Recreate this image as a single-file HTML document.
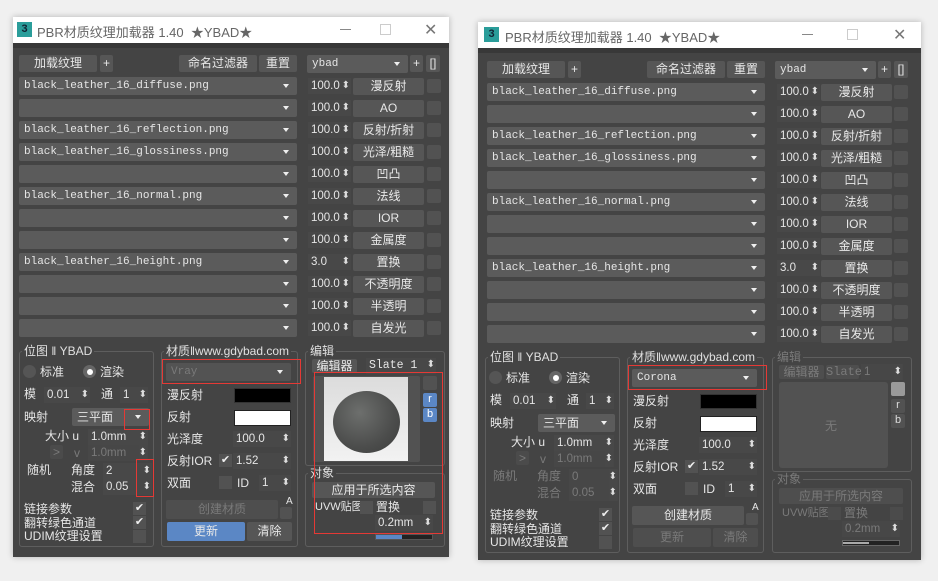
<!DOCTYPE html>
<html><head><meta charset="utf-8">
<style>
*{box-sizing:border-box;margin:0;padding:0}
body{width:938px;height:575px;background:#f0f0f0;position:relative;overflow:hidden;font-family:"Liberation Sans","Noto Sans CJK SC",sans-serif;font-size:12px;color:#dcdcdc}
.a{position:absolute}
.win{position:absolute;left:0;top:0;width:938px;height:575px}
.chrome{position:absolute;background:#444;box-shadow:0 0 6px rgba(0,0,0,.25)}
.title{position:absolute;background:#fff;color:#666;font-size:13px}
.dd{position:absolute;background:#5b5b5b;border-radius:2px;height:18px;line-height:18px;padding-left:5px;font-family:"Liberation Mono","Noto Sans CJK SC",monospace;font-size:11px;color:#e6e6e6;white-space:nowrap;overflow:hidden}
.dd:after{content:"";position:absolute;right:8px;top:7px;border-left:3px solid transparent;border-right:3px solid transparent;border-top:4px solid #eee}
.sp{position:absolute;background:#484848;height:16px;line-height:16px;padding-left:3px;font-size:11.5px;color:#e6e6e6;font-family:"Liberation Sans",sans-serif;overflow:hidden;white-space:nowrap}
.sp:after{content:"⬍";position:absolute;right:1px;top:0;font-size:10px;color:#ddd;background:#484848}
.btn{position:absolute;background:#565656;border-radius:2px;text-align:center;color:#e8e8e8;height:17px;line-height:17px;font-size:12px;white-space:nowrap}
.box{position:absolute;background:#525252;border-radius:2px;width:14px;height:14px}
.grp{position:absolute;border:1px solid #5e5e5e;border-radius:3px}
.gt{position:absolute;background:#444;padding:0 2px;font-size:12px;line-height:14px;color:#e0e0e0;white-space:nowrap}
.t{position:absolute;white-space:nowrap;font-size:12px;line-height:14px;color:#e6e6e6}
.dis{color:#7a7a7a!important}
.chk{position:absolute;background:#525252;width:13px;height:13px;font-size:11px;line-height:13px;text-align:center;color:#eee}
.red{position:absolute;border:1px solid #e53935}
.rad{position:absolute;width:13px;height:13px;border-radius:50%;background:#555}
.blue{background:#5b87c5!important}
.mn{position:absolute;width:11px;height:1px;background:#888}
.mx{position:absolute;width:11px;height:11px;border:1px solid #ccc}
.cl{position:absolute;font-size:16px;color:#777}
</style></head><body>

<div class="win">
<div class="chrome" style="left:13px;top:17px;width:436px;height:540px"></div>
<div class="title" style="left:13px;top:17px;width:436px;height:26px">
 <div class="a" style="left:4px;top:5px;width:15px;height:15px;background:#2a9d9a;color:#123;font-size:11px;font-weight:bold;text-align:center;line-height:15px">3</div>
 <div class="a" style="left:24px;top:5px;white-space:nowrap">PBR材质纹理加载器 1.40 &nbsp;★YBAD★</div>
 <div class="mn" style="left:327px;top:12px"></div>
 <div class="mx" style="left:367px;top:7px"></div>
 <div class="cl" style="left:411px;top:3px">✕</div>
</div>
<div class="a" style="left:13px;top:43px;width:436px;height:5px;background:#383838"></div>
</div>

<div class="win">
<div class="chrome" style="left:478px;top:22px;width:443px;height:538px"></div>
<div class="title" style="left:478px;top:22px;width:443px;height:26px">
 <div class="a" style="left:6px;top:5px;width:15px;height:15px;background:#2a9d9a;color:#123;font-size:11px;font-weight:bold;text-align:center;line-height:15px">3</div>
 <div class="a" style="left:27px;top:5px;white-space:nowrap">PBR材质纹理加载器 1.40 &nbsp;★YBAD★</div>
 <div class="mn" style="left:324px;top:12px"></div>
 <div class="mx" style="left:369px;top:7px"></div>
 <div class="cl" style="left:415px;top:3px">✕</div>
</div>
<div class="a" style="left:478px;top:48px;width:443px;height:5px;background:#383838"></div>
</div>

<div class="win">
<div class="btn" style="left:19px;top:55px;width:78px">加载纹理</div>
<div class="btn" style="left:100px;top:55px;width:13px">+</div>
<div class="btn" style="left:179px;top:55px;width:78px">命名过滤器</div>
<div class="btn" style="left:259px;top:55px;width:38px">重置</div>
<div class="dd" style="left:307px;top:55px;width:101px">ybad</div>
<div class="btn" style="left:410px;top:55px;width:13px">+</div>
<div class="btn" style="left:426px;top:55px;width:14px">[]</div>

<div class="dd" style="left:19px;top:77px;width:278px">black_leather_16_diffuse.png</div>
<div class="dd" style="left:19px;top:99px;width:278px"></div>
<div class="dd" style="left:19px;top:121px;width:278px">black_leather_16_reflection.png</div>
<div class="dd" style="left:19px;top:143px;width:278px">black_leather_16_glossiness.png</div>
<div class="dd" style="left:19px;top:165px;width:278px"></div>
<div class="dd" style="left:19px;top:187px;width:278px">black_leather_16_normal.png</div>
<div class="dd" style="left:19px;top:209px;width:278px"></div>
<div class="dd" style="left:19px;top:231px;width:278px"></div>
<div class="dd" style="left:19px;top:253px;width:278px">black_leather_16_height.png</div>
<div class="dd" style="left:19px;top:275px;width:278px"></div>
<div class="dd" style="left:19px;top:297px;width:278px"></div>
<div class="dd" style="left:19px;top:319px;width:278px"></div>

<div class="sp" style="left:308px;top:78px;width:43px">100.0</div>
<div class="sp" style="left:308px;top:100px;width:43px">100.0</div>
<div class="sp" style="left:308px;top:122px;width:43px">100.0</div>
<div class="sp" style="left:308px;top:144px;width:43px">100.0</div>
<div class="sp" style="left:308px;top:166px;width:43px">100.0</div>
<div class="sp" style="left:308px;top:188px;width:43px">100.0</div>
<div class="sp" style="left:308px;top:210px;width:43px">100.0</div>
<div class="sp" style="left:308px;top:232px;width:43px">100.0</div>
<div class="sp" style="left:308px;top:254px;width:43px">3.0</div>
<div class="sp" style="left:308px;top:276px;width:43px">100.0</div>
<div class="sp" style="left:308px;top:298px;width:43px">100.0</div>
<div class="sp" style="left:308px;top:320px;width:43px">100.0</div>

<div class="btn" style="left:353px;top:78px;width:71px">漫反射</div>
<div class="btn" style="left:353px;top:100px;width:71px">AO</div>
<div class="btn" style="left:353px;top:122px;width:71px">反射/折射</div>
<div class="btn" style="left:353px;top:144px;width:71px">光泽/粗糙</div>
<div class="btn" style="left:353px;top:166px;width:71px">凹凸</div>
<div class="btn" style="left:353px;top:188px;width:71px">法线</div>
<div class="btn" style="left:353px;top:210px;width:71px">IOR</div>
<div class="btn" style="left:353px;top:232px;width:71px">金属度</div>
<div class="btn" style="left:353px;top:254px;width:71px">置换</div>
<div class="btn" style="left:353px;top:276px;width:71px">不透明度</div>
<div class="btn" style="left:353px;top:298px;width:71px">半透明</div>
<div class="btn" style="left:353px;top:320px;width:71px">自发光</div>

<div class="box" style="left:427px;top:79px"></div>
<div class="box" style="left:427px;top:101px"></div>
<div class="box" style="left:427px;top:123px"></div>
<div class="box" style="left:427px;top:145px"></div>
<div class="box" style="left:427px;top:167px"></div>
<div class="box" style="left:427px;top:189px"></div>
<div class="box" style="left:427px;top:211px"></div>
<div class="box" style="left:427px;top:233px"></div>
<div class="box" style="left:427px;top:255px"></div>
<div class="box" style="left:427px;top:277px"></div>
<div class="box" style="left:427px;top:299px"></div>
<div class="box" style="left:427px;top:321px"></div>

<div class="grp" style="left:19px;top:351px;width:135px;height:196px"></div>
<div class="gt" style="left:22px;top:344px">位图 ‖ YBAD</div>
<div class="grp" style="left:161px;top:351px;width:137px;height:196px"></div>
<div class="gt" style="left:164px;top:344px">材质‖www.gdybad.com</div>
<div class="grp" style="left:305px;top:351px;width:140px;height:115px"></div>
<div class="gt" style="left:308px;top:344px">编辑</div>
<div class="grp" style="left:305px;top:473px;width:140px;height:74px"></div>
<div class="gt" style="left:308px;top:466px">对象</div>

<div class="rad" style="left:23px;top:365px"></div><div class="t" style="left:40px;top:365px">标准</div>
<div class="rad" style="left:83px;top:365px;background:#666"></div><div class="a" style="left:87px;top:369px;width:6px;height:6px;border-radius:50%;background:#fff"></div><div class="t" style="left:100px;top:365px">渲染</div>
<div class="t" style="left:24px;top:387px">模</div><div class="sp" style="left:44px;top:387px;width:46px">0.01</div>
<div class="t" style="left:101px;top:387px">通</div><div class="sp" style="left:120px;top:387px;width:28px">1</div>
<div class="t" style="left:24px;top:410px">映射</div><div class="dd" style="left:72px;top:408px;width:77px;font-family:'Noto Sans CJK SC',sans-serif;font-size:12px;padding-left:5px">三平面</div>
<div class="t" style="left:45px;top:429px">大小 u</div><div class="sp" style="left:88px;top:429px;width:60px">1.0mm</div>
<div class="btn dis" style="left:50px;top:445px;width:13px;height:14px;line-height:14px;background:#4b4b4b">&gt;</div>
<div class="t dis" style="left:74px;top:446px">v</div><div class="sp dis" style="left:88px;top:445px;width:60px;background:#474747">1.0mm</div>
<div class="t" style="left:27px;top:463px">随机</div>
<div class="t" style="left:71px;top:463px">角度</div><div class="sp" style="left:103px;top:463px;width:49px">2</div>
<div class="t" style="left:71px;top:480px">混合</div><div class="sp" style="left:103px;top:479px;width:49px">0.05</div>
<div class="t" style="left:24px;top:502px">链接参数</div><div class="chk" style="left:133px;top:502px">✔</div>
<div class="t" style="left:24px;top:516px">翻转绿色通道</div><div class="chk" style="left:133px;top:516px">✔</div>
<div class="t" style="left:24px;top:529px">UDIM纹理设置</div><div class="chk" style="left:133px;top:530px"></div>

<div class="t" style="left:167px;top:388px">漫反射</div><div class="a" style="left:234px;top:388px;width:57px;height:15px;background:#000;border:1px solid #333"></div>
<div class="t" style="left:167px;top:410px">反射</div><div class="a" style="left:234px;top:410px;width:57px;height:16px;background:#fff;border:1px solid #222"></div>
<div class="t" style="left:167px;top:432px">光泽度</div><div class="sp" style="left:233px;top:431px;width:58px">100.0</div>
<div class="t" style="left:167px;top:454px">反射IOR</div><div class="chk" style="left:219px;top:454px">✔</div><div class="sp" style="left:233px;top:453px;width:58px">1.52</div>
<div class="t" style="left:167px;top:476px">双面</div><div class="chk" style="left:219px;top:476px"></div><div class="t" style="left:237px;top:476px">ID</div><div class="sp" style="left:259px;top:475px;width:32px">1</div>
<div class="t" style="left:286px;top:495px;font-size:10px">A</div><div class="box" style="left:280px;top:507px;width:12px;height:12px"></div>

<div class="dd dis" style="left:166px;top:363px;width:125px;background:#535353">Vray</div>
<div class="red" style="left:162px;top:359px;width:139px;height:25px"></div>
<div class="red" style="left:124px;top:409px;width:26px;height:21px"></div>
<div class="red" style="left:136px;top:459px;width:18px;height:38px"></div>
<div class="btn dis" style="left:166px;top:500px;width:112px;height:19px;line-height:19px;background:#4e4e4e">创建材质</div>
<div class="btn blue" style="left:167px;top:522px;width:78px;height:19px;line-height:19px">更新</div>
<div class="btn" style="left:247px;top:522px;width:45px;height:19px;line-height:19px">清除</div>

<div class="btn" style="left:312px;top:359px;width:45px;height:14px;line-height:14px">编辑器</div>
<div class="sp" style="left:366px;top:358px;width:70px;font-family:'Liberation Mono',monospace">Slate 1</div>
<div class="a" style="left:313px;top:376px;width:107px;height:86px;background:#525252;border-radius:2px"></div>
<div class="a" style="left:324px;top:377px;width:84px;height:84px;background:linear-gradient(180deg,#dcdcdc,#f2f2f2)"></div>
<div class="a" style="left:333px;top:391px;width:67px;height:62px;border-radius:50%;background:radial-gradient(circle at 40% 35%,#6d6f6d,#4c4d4c 60%,#3b3c3b)"></div>
<div class="box" style="left:423px;top:376px;width:14px"></div>
<div class="box blue" style="left:423px;top:393px;color:#fff;text-align:center;line-height:13px;font-size:11px">r</div>
<div class="box blue" style="left:423px;top:408px;color:#fff;text-align:center;line-height:13px;font-size:11px">b</div>
<div class="btn" style="left:312px;top:482px;width:123px;height:16px;line-height:16px">应用于所选内容</div>
<div class="t" style="left:315px;top:500px;font-size:11px">UVW贴图</div><div class="chk" style="left:360px;top:501px"></div>
<div class="t" style="left:376px;top:500px">置换</div><div class="chk" style="left:423px;top:501px"></div>
<div class="sp" style="left:375px;top:515px;width:58px">0.2mm</div>
<div class="a" style="left:375px;top:534px;width:58px;height:6px;background:#222;border:1px solid #555"><div style="width:26px;height:4px;background:#5b87c5"></div></div>
<div class="red" style="left:314px;top:372px;width:129px;height:162px"></div>
</div>

<div class="win">
<div class="btn" style="left:487px;top:61px;width:78px">加载纹理</div>
<div class="btn" style="left:568px;top:61px;width:13px">+</div>
<div class="btn" style="left:647px;top:61px;width:78px">命名过滤器</div>
<div class="btn" style="left:727px;top:61px;width:38px">重置</div>
<div class="dd" style="left:775px;top:61px;width:101px">ybad</div>
<div class="btn" style="left:878px;top:61px;width:13px">+</div>
<div class="btn" style="left:894px;top:61px;width:14px">[]</div>
</div>

<div class="win" style="left:468px;top:6px">
<div class="dd" style="left:19px;top:77px;width:278px">black_leather_16_diffuse.png</div>
<div class="dd" style="left:19px;top:99px;width:278px"></div>
<div class="dd" style="left:19px;top:121px;width:278px">black_leather_16_reflection.png</div>
<div class="dd" style="left:19px;top:143px;width:278px">black_leather_16_glossiness.png</div>
<div class="dd" style="left:19px;top:165px;width:278px"></div>
<div class="dd" style="left:19px;top:187px;width:278px">black_leather_16_normal.png</div>
<div class="dd" style="left:19px;top:209px;width:278px"></div>
<div class="dd" style="left:19px;top:231px;width:278px"></div>
<div class="dd" style="left:19px;top:253px;width:278px">black_leather_16_height.png</div>
<div class="dd" style="left:19px;top:275px;width:278px"></div>
<div class="dd" style="left:19px;top:297px;width:278px"></div>
<div class="dd" style="left:19px;top:319px;width:278px"></div>
<div class="sp" style="left:309px;top:78px;width:43px">100.0</div>
<div class="sp" style="left:309px;top:100px;width:43px">100.0</div>
<div class="sp" style="left:309px;top:122px;width:43px">100.0</div>
<div class="sp" style="left:309px;top:144px;width:43px">100.0</div>
<div class="sp" style="left:309px;top:166px;width:43px">100.0</div>
<div class="sp" style="left:309px;top:188px;width:43px">100.0</div>
<div class="sp" style="left:309px;top:210px;width:43px">100.0</div>
<div class="sp" style="left:309px;top:232px;width:43px">100.0</div>
<div class="sp" style="left:309px;top:254px;width:43px">3.0</div>
<div class="sp" style="left:309px;top:276px;width:43px">100.0</div>
<div class="sp" style="left:309px;top:298px;width:43px">100.0</div>
<div class="sp" style="left:309px;top:320px;width:43px">100.0</div>
<div class="btn" style="left:353px;top:78px;width:71px">漫反射</div>
<div class="btn" style="left:353px;top:100px;width:71px">AO</div>
<div class="btn" style="left:353px;top:122px;width:71px">反射/折射</div>
<div class="btn" style="left:353px;top:144px;width:71px">光泽/粗糙</div>
<div class="btn" style="left:353px;top:166px;width:71px">凹凸</div>
<div class="btn" style="left:353px;top:188px;width:71px">法线</div>
<div class="btn" style="left:353px;top:210px;width:71px">IOR</div>
<div class="btn" style="left:353px;top:232px;width:71px">金属度</div>
<div class="btn" style="left:353px;top:254px;width:71px">置换</div>
<div class="btn" style="left:353px;top:276px;width:71px">不透明度</div>
<div class="btn" style="left:353px;top:298px;width:71px">半透明</div>
<div class="btn" style="left:353px;top:320px;width:71px">自发光</div>
<div class="box" style="left:426px;top:79px"></div>
<div class="box" style="left:426px;top:101px"></div>
<div class="box" style="left:426px;top:123px"></div>
<div class="box" style="left:426px;top:145px"></div>
<div class="box" style="left:426px;top:167px"></div>
<div class="box" style="left:426px;top:189px"></div>
<div class="box" style="left:426px;top:211px"></div>
<div class="box" style="left:426px;top:233px"></div>
<div class="box" style="left:426px;top:255px"></div>
<div class="box" style="left:426px;top:277px"></div>
<div class="box" style="left:426px;top:299px"></div>
<div class="box" style="left:426px;top:321px"></div>

<div class="grp" style="left:17px;top:351px;width:135px;height:196px"></div>
<div class="gt" style="left:20px;top:344px">位图 ‖ YBAD</div>
<div class="grp" style="left:159px;top:351px;width:137px;height:196px"></div>
<div class="gt" style="left:162px;top:344px">材质‖www.gdybad.com</div>
<div class="grp" style="left:304px;top:351px;width:140px;height:115px"></div>
<div class="gt dis" style="left:307px;top:344px">编辑</div>
<div class="grp" style="left:304px;top:473px;width:140px;height:74px"></div>
<div class="gt dis" style="left:307px;top:466px">对象</div>

<div class="rad" style="left:21px;top:365px"></div><div class="t" style="left:38px;top:365px">标准</div>
<div class="rad" style="left:81px;top:365px;background:#666"></div><div class="a" style="left:85px;top:369px;width:6px;height:6px;border-radius:50%;background:#fff"></div><div class="t" style="left:98px;top:365px">渲染</div>
<div class="t" style="left:22px;top:387px">模</div><div class="sp" style="left:42px;top:387px;width:46px">0.01</div>
<div class="t" style="left:99px;top:387px">通</div><div class="sp" style="left:118px;top:387px;width:28px">1</div>
<div class="t" style="left:22px;top:410px">映射</div><div class="dd" style="left:70px;top:408px;width:77px;font-family:'Noto Sans CJK SC',sans-serif;font-size:12px">三平面</div>
<div class="t" style="left:43px;top:429px">大小 u</div><div class="sp" style="left:86px;top:429px;width:60px">1.0mm</div>
<div class="btn dis" style="left:48px;top:445px;width:13px;height:14px;line-height:14px;background:#4b4b4b">&gt;</div>
<div class="t dis" style="left:72px;top:446px">v</div><div class="sp dis" style="left:86px;top:445px;width:60px;background:#474747">1.0mm</div>
<div class="t dis" style="left:25px;top:463px">随机</div>
<div class="t dis" style="left:69px;top:463px">角度</div><div class="sp dis" style="left:101px;top:463px;width:49px;background:#474747">0</div>
<div class="t dis" style="left:69px;top:480px">混合</div><div class="sp dis" style="left:101px;top:479px;width:49px;background:#474747">0.05</div>
<div class="t" style="left:22px;top:502px">链接参数</div><div class="chk" style="left:131px;top:502px">✔</div>
<div class="t" style="left:22px;top:516px">翻转绿色通道</div><div class="chk" style="left:131px;top:516px">✔</div>
<div class="t" style="left:22px;top:529px">UDIM纹理设置</div><div class="chk" style="left:131px;top:530px"></div>

<div class="dd" style="left:164px;top:363px;width:125px">Corona</div>
<div class="red" style="left:160px;top:359px;width:139px;height:25px"></div>
<div class="t" style="left:165px;top:388px">漫反射</div><div class="a" style="left:232px;top:388px;width:57px;height:15px;background:#000;border:1px solid #333"></div>
<div class="t" style="left:165px;top:410px">反射</div><div class="a" style="left:232px;top:410px;width:57px;height:16px;background:#fff;border:1px solid #222"></div>
<div class="t" style="left:165px;top:432px">光泽度</div><div class="sp" style="left:231px;top:431px;width:58px">100.0</div>
<div class="t" style="left:165px;top:454px">反射IOR</div><div class="chk" style="left:217px;top:454px">✔</div><div class="sp" style="left:231px;top:453px;width:58px">1.52</div>
<div class="t" style="left:165px;top:476px">双面</div><div class="chk" style="left:217px;top:476px"></div><div class="t" style="left:235px;top:476px">ID</div><div class="sp" style="left:257px;top:475px;width:32px">1</div>
<div class="t" style="left:284px;top:495px;font-size:10px">A</div><div class="box" style="left:278px;top:507px;width:12px;height:12px"></div>
<div class="btn" style="left:164px;top:500px;width:112px;height:19px;line-height:19px">创建材质</div>
<div class="btn dis" style="left:165px;top:522px;width:78px;height:19px;line-height:19px;background:#4e4e4e">更新</div>
<div class="btn dis" style="left:245px;top:522px;width:45px;height:19px;line-height:19px;background:#4e4e4e">清除</div>

<div class="btn dis" style="left:311px;top:359px;width:45px;height:14px;line-height:14px;background:#4e4e4e">编辑器</div>
<div class="btn dis" style="left:358px;top:359px;width:33px;height:14px;line-height:14px;background:#4e4e4e;font-family:'Liberation Mono',monospace">Slate</div>
<div class="sp dis" style="left:393px;top:358px;width:42px;background:#474747">1</div>
<div class="a" style="left:311px;top:376px;width:109px;height:86px;background:#525252;border-radius:3px"></div>
<div class="t dis" style="left:357px;top:413px">无</div>
<div class="box" style="left:423px;top:376px;background:#9a9a9a"></div>
<div class="box" style="left:423px;top:393px;text-align:center;line-height:13px;font-size:11px">r</div>
<div class="box" style="left:423px;top:408px;text-align:center;line-height:13px;font-size:11px">b</div>
<div class="btn dis" style="left:311px;top:482px;width:124px;height:16px;line-height:16px;background:#4e4e4e">应用于所选内容</div>
<div class="t dis" style="left:314px;top:500px;font-size:11px">UVW贴图</div><div class="chk" style="left:360px;top:501px;background:#4b4b4b"></div>
<div class="t dis" style="left:376px;top:500px">置换</div><div class="chk" style="left:422px;top:501px;background:#4b4b4b"></div>
<div class="sp dis" style="left:374px;top:515px;width:58px;background:#474747">0.2mm</div>
<div class="a" style="left:374px;top:534px;width:58px;height:6px;background:#222;border:1px solid #666"><div style="width:26px;height:2px;margin-top:1px;background:#aaa"></div></div>
</div>

</body></html>
